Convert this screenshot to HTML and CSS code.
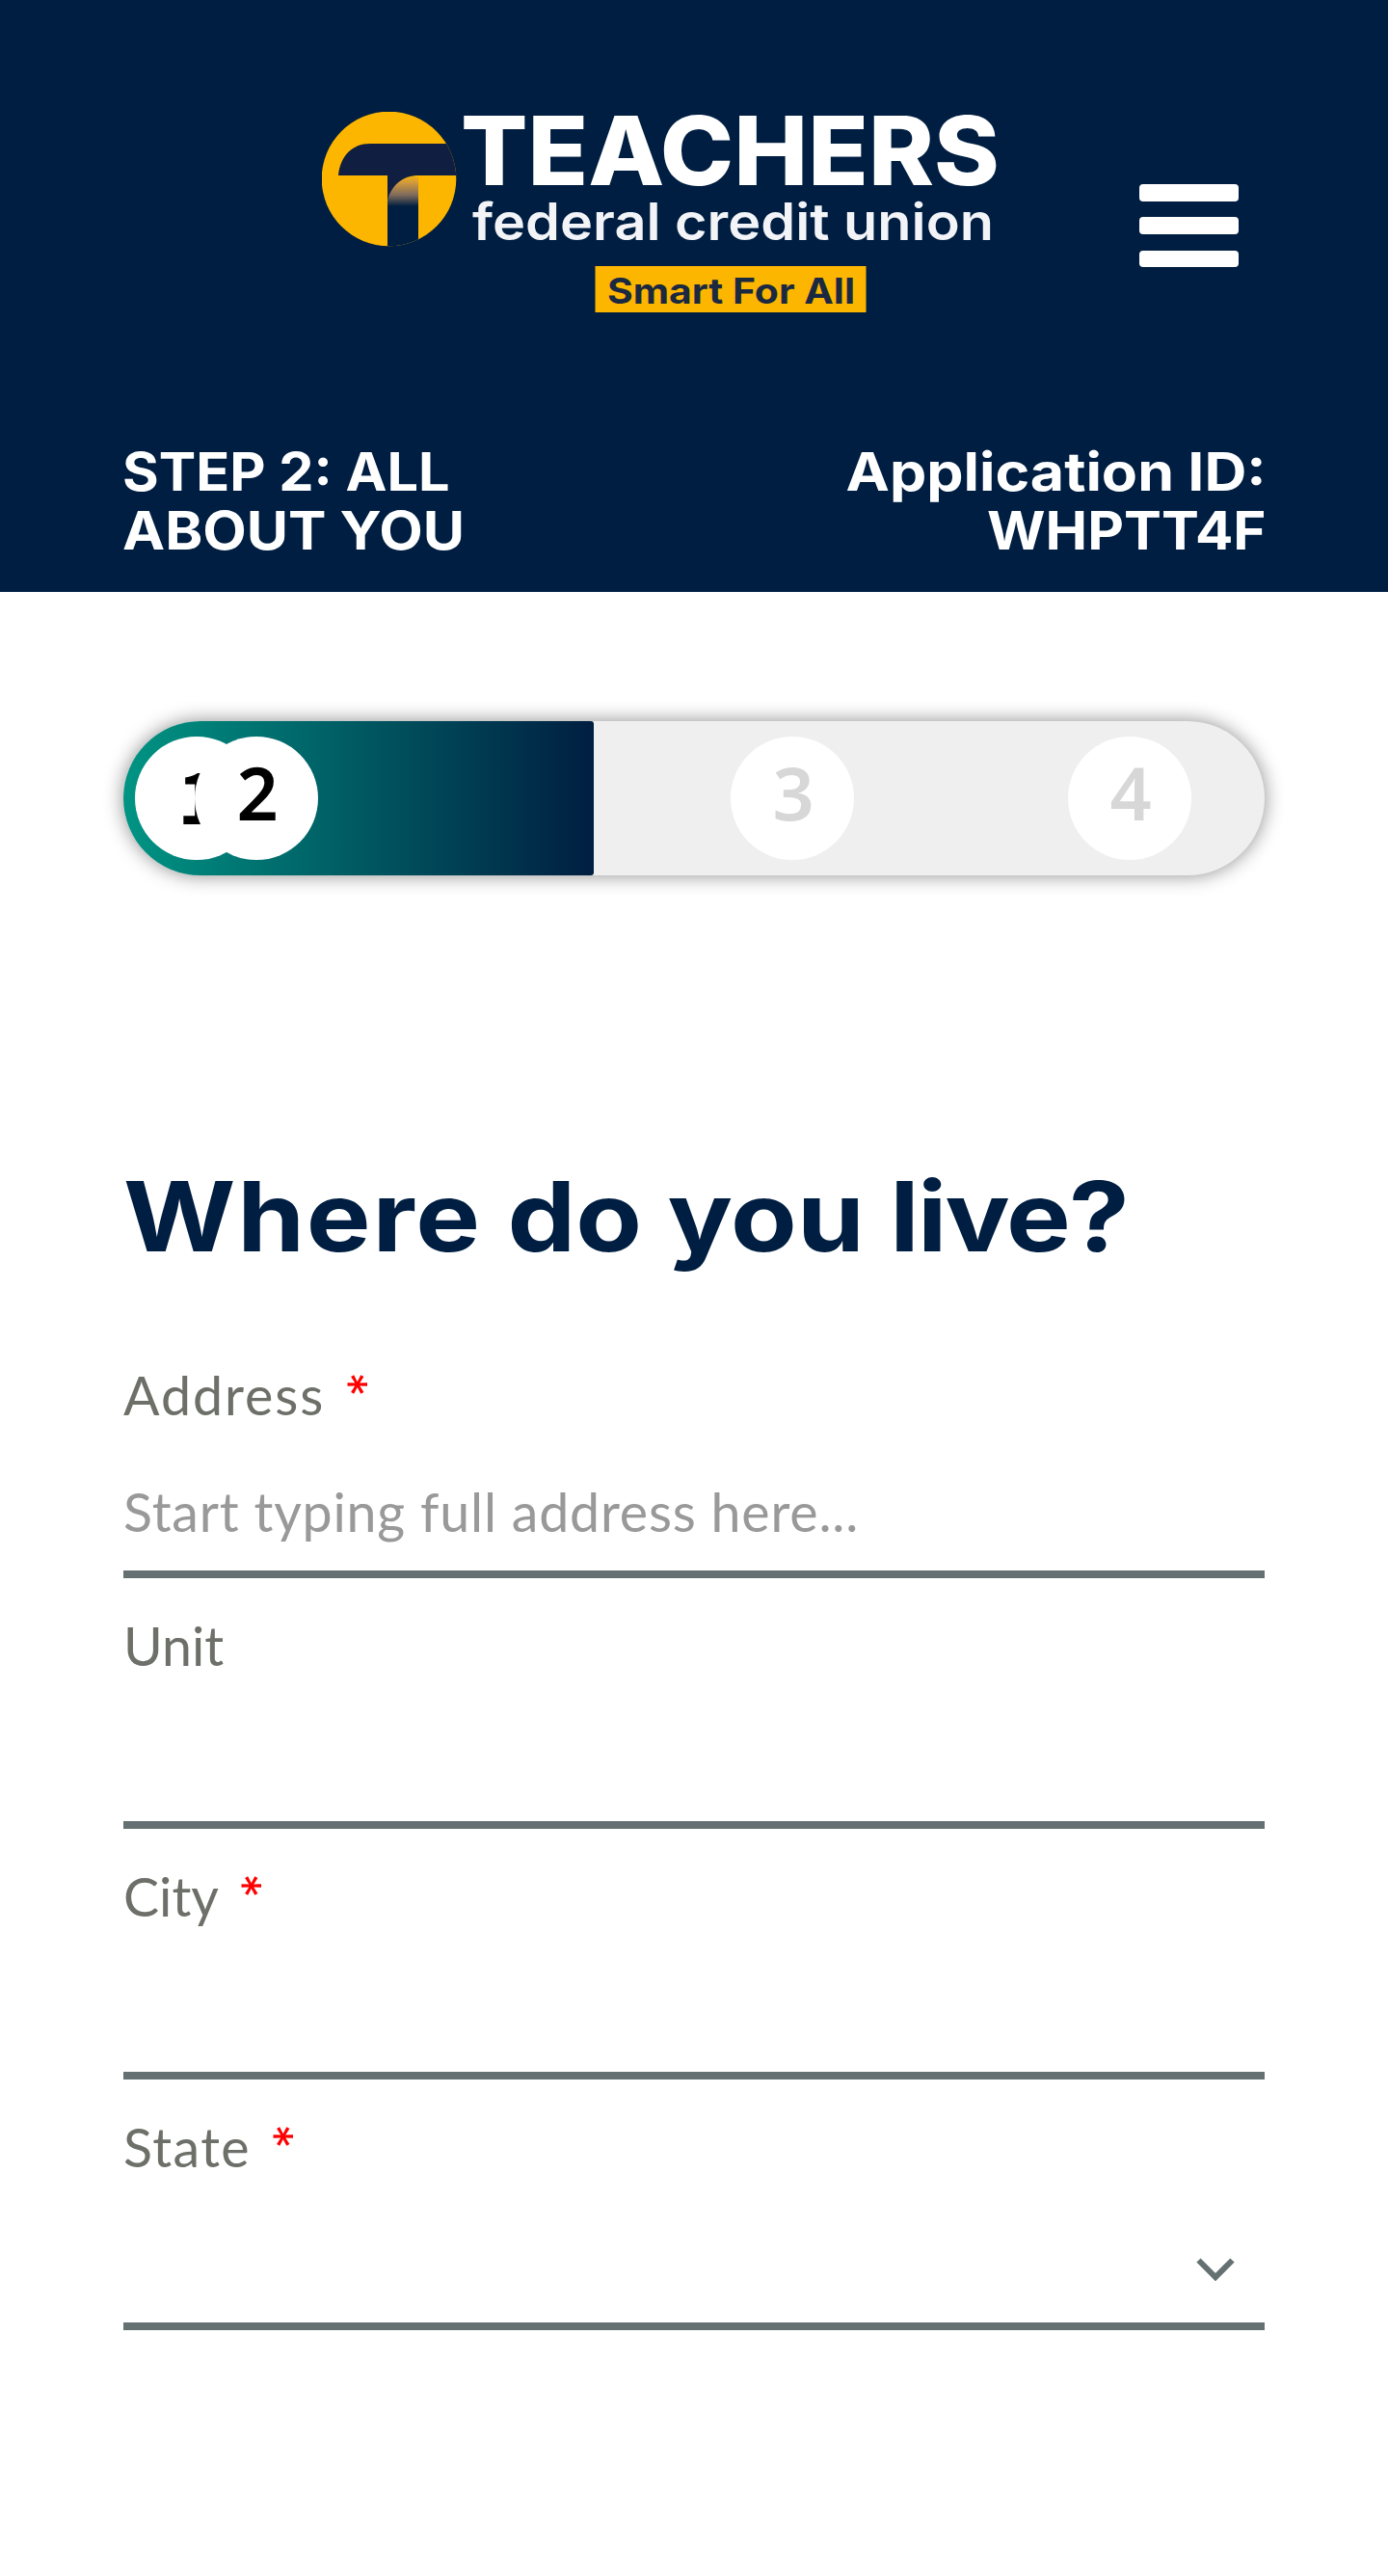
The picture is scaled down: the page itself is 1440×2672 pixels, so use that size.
FILE: index.html
```html
<!DOCTYPE html>
<html lang="en">
<head>
<meta charset="utf-8">
<title>Teachers Federal Credit Union - All About You</title>
<link rel="stylesheet" href="styles.css">
</head>
<body>
<header class="header">
  <div class="brand-row">
    <svg class="logo" viewBox="0 0 700 208" role="img" aria-label="Teachers Federal Credit Union">
      <defs>
        <clipPath id="disc"><circle cx="69.5" cy="69.5" r="69.8"/></clipPath>
        <linearGradient id="fade" x1="0" y1="65" x2="0" y2="98" gradientUnits="userSpaceOnUse">
          <stop offset="0" stop-color="#fdb600"/><stop offset=".25" stop-color="#d39a3c"/><stop offset=".65" stop-color="#7d6a5c"/><stop offset="1" stop-color="#001e41"/>
        </linearGradient>
      </defs>
      <g clip-path="url(#disc)">
        <rect width="140" height="140" fill="#fdb600"/>
        <path d="M68 65H100V140H68Z" fill="url(#fade)"/>
        <path d="M17 66C19 46 31 33 50 33H140V66H100C84 66 72 76 68 92V66Z" fill="#101e41"/>
      </g>
      <text class="logo-name" x="144" y="75.5" textLength="559" lengthAdjust="spacingAndGlyphs">TEACHERS</text>
      <text class="logo-sub" x="156" y="132.5" textLength="541" lengthAdjust="spacingAndGlyphs">federal credit union</text>
      <rect x="283.500" y="160" width="281" height="48" fill="#fdb600"/>
      <text class="logo-tag" x="296" y="199" textLength="257" lengthAdjust="spacingAndGlyphs">Smart For All</text>
    </svg>
    <button class="menu" aria-label="Menu"><span></span><span></span><span></span></button>
  </div>
  <div class="info">
    <div class="step"><div class="step-top">STEP 2: ALL</div><div class="step-bottom">ABOUT YOU</div></div>
    <div class="app"><div class="app-label">Application ID:</div><div class="app-id">WHPTT4F</div></div>
  </div>
</header>
<main class="main">
  <div class="progress">
    <div class="done"><span class="dot first">1</span><span class="dot current">2</span></div>
    <div class="todo"><span class="dot">3</span><span class="dot">4</span></div>
  </div>
  <h1 class="title"><span class="wide">Where</span> do you <span class="tight">live?</span></h1>
  <form class="form">
    <div class="field"><label class="label"><span class="address">Address</span><span class="star">*</span></label><div class="control"><span class="hint">Start typing full address here...</span></div></div>
    <div class="field"><label class="label"><span>Unit</span></label><div class="control"></div></div>
    <div class="field"><label class="label"><span>City</span><span class="star">*</span></label><div class="control"></div></div>
    <div class="field"><label class="label"><span class="state">State</span><span class="star">*</span></label><div class="control select"><svg class="chevron" viewBox="0 0 40 24"><path d="M2.500 2.500L20 20L37.500 2.500" fill="none" stroke="#647071" stroke-width="6"/></svg></div></div>
  </form>
</main>
</body>
</html>
```
FILE: styles.css
```css
* { box-sizing: border-box; }
body { margin: 0; background: #fff; font-family: Lato, "Open Sans", sans-serif; }
.header { height: 614px; padding: 116px 128px 0; background: #001e41; color: #fff; font-family: Inter, "Liberation Sans", sans-serif; }
.brand-row { height: 208px; display: flex; padding: 0 27px 0 206px; justify-content: space-between; }
.logo { width: 700px; height: 208px; display: block; overflow: hidden; }
.logo-name { font-size: 98.6px; font-weight: 800; fill: #fff; }
.logo-sub { font-size: 53px; font-weight: 600; fill: #f2f4f7; }
.logo-tag { font-size: 37px; font-weight: 700; fill: #1b2940; }
.menu { width: 103px; height: 86px; margin: 75px 0 0; padding: 0; border: 0; background: none; display: flex; flex-direction: column; justify-content: space-between; }
.menu span { display: block; width: 103px; height: 17.5px; border-radius: 4px; background: #fff; }
.info { display: flex; justify-content: space-between; margin: 135px -2px 0 -1px; font-size: 55px; font-weight: 700; line-height: 61px; white-space: nowrap; }
.step div { transform-origin: left; }
.step .step-top { transform: scaleX(1.048); }
.step .step-bottom { transform: scaleX(1.075); }
.app { text-align: right; }
.app div { transform-origin: right; }
.app .app-label { transform: scaleX(1.105); }
.app .app-id { transform: scaleX(1.061); }
.main { padding: 134px 128px 0; }
.progress { display: flex; height: 160px; border-radius: 80px; background: #efefef; box-shadow: 0 0 20px rgba(0, 0, 0, .45); font: 600 75.6px/116px "Noto Sans", sans-serif; }
.done { width: 488px; display: flex; padding: 16px 12px; border-radius: 80px 3px 3px 80px; background: linear-gradient(90deg, #009483, #001e41); color: #000; }
.todo { flex: 1; display: flex; justify-content: space-between; padding: 16px 76px 16px 142px; color: #d7d7d7; }
.dot { width: 128px; height: 128px; border-radius: 50%; background: #fff; text-align: center; padding-left: 2px; }
.first { padding-left: 4px; font: 700 74px/118px "Noto Sans CJK JP", sans-serif; }
.done .current { margin-left: -66px; }
.title { margin: 293px 0 0; color: #001e41; font: 700 100px/122px Inter, sans-serif; white-space: nowrap; transform: scaleX(1.122); transform-origin: left; }
.wide { letter-spacing: 1.6px; }
.tight { letter-spacing: -1.6px; }
.form { margin-top: 88px; display: flex; flex-direction: column; gap: 34px; }
.field { height: 226px; display: flex; flex-direction: column; }
.label { display: flex; gap: 10px; font-size: 55.5px; line-height: 71px; color: #6d6f69; }
.address { letter-spacing: 1.95px; }
.state { letter-spacing: 1.4px; }
.hint { letter-spacing: .8px; }
.star { font-family: Inter, sans-serif; font-size: 50px; font-weight: 400; color: #f00; display: block; width: 32px; height: 50px; line-height: 52px; text-align: center; transform: rotate(90deg); }
.control { flex: 1; padding-top: 51px; border-bottom: 8px solid #647071; font-size: 55.5px; line-height: 69px; color: #999; }
.select { display: flex; justify-content: flex-end; padding: 80px 31px 0 0; }
.chevron { width: 40px; height: 24px; }
```
